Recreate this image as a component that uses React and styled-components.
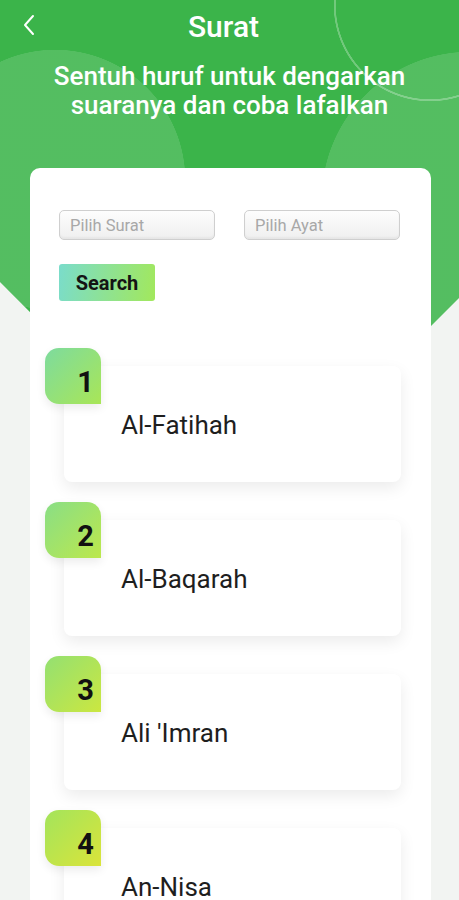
import React from 'react';
import styled, { createGlobalStyle } from 'styled-components';

const GlobalStyle = createGlobalStyle`
  body {
    margin: 0;
    font-family: Roboto, "Liberation Sans", sans-serif;
    background: #f2f4f2;
  }
`;

const Page = styled.div`
  position: relative;
  height: 900px;
  overflow: hidden;
  background: #f2f4f2;

  &::before {
    content: '';
    position: absolute;
    left: 0;
    right: 0;
    top: 0;
    height: 540px;
    background:
      radial-gradient(circle at 430px 5px, transparent 94px, rgba(255, 255, 255, 0.28) 94.5px, rgba(255, 255, 255, 0.28) 96px, transparent 96.5px),
      radial-gradient(circle at 55px 180px, rgba(255, 255, 255, 0.13) 130px, transparent 130.5px),
      radial-gradient(circle at 470px 200px, rgba(255, 255, 255, 0.13) 148px, transparent 148.5px),
      #3bb44a;
    clip-path: polygon(0 0, 100% 0, 100% 298px, 237px 520px, 0 282px);
  }
`;

const Header = styled.header`
  position: relative;
  z-index: 1;
  color: #fff;
`;

const TopBar = styled.div`
  display: grid;
  grid-template-columns: 46px 1fr 58px;
  align-items: center;
  height: 50px;
`;

const BackButton = styled.button`
  display: flex;
  align-items: center;
  justify-content: flex-start;
  width: 46px;
  height: 50px;
  padding: 0 0 0 22px;
  border: 0;
  background: none;
  cursor: pointer;
`;

const Title = styled.h1`
  margin: 0;
  padding-top: 3px;
  text-align: center;
  font-size: 30px;
  font-weight: 500;
  line-height: 47px;
`;

const Subtitle = styled.p`
  margin: 12px 0 0;
  text-align: center;
  font-size: 26px;
  font-weight: 500;
  line-height: 29px;
`;

const Card = styled.main`
  position: relative;
  z-index: 1;
  margin: 48px 28px 0 30px;
  height: 740px;
  background: #fff;
  border-radius: 10px;
`;

const SearchForm = styled.form`
  padding: 42px 30px 47px 29px;
`;

const Fields = styled.div`
  display: flex;
  gap: 29px;
`;

const Field = styled.input`
  box-sizing: border-box;
  width: 156px;
  height: 30px;
  padding: 0 10px;
  border: 1px solid #cfcfcf;
  border-radius: 5px;
  background: linear-gradient(#fdfdfd, #efefef);
  box-shadow: inset 0 -2px 2px rgba(0, 0, 0, 0.04);
  font-family: Roboto, "Liberation Sans", sans-serif;
  font-size: 16.5px;
  color: #333;

  &::placeholder {
    color: #a8a8a8;
  }
`;

const SearchButton = styled.button`
  display: block;
  margin-top: 24px;
  width: 96px;
  height: 37px;
  padding: 0;
  border: 0;
  border-radius: 3px;
  background: linear-gradient(100deg, #7adccb, #a2e85c);
  font-family: Roboto, "Liberation Sans", sans-serif;
  font-size: 20px;
  font-weight: 700;
  color: #141414;
`;

const List = styled.ul`
  list-style: none;
  margin: 0;
  padding: 0 0 0 15px;
  display: flex;
  flex-direction: column;
  gap: 20px;
`;

const Item = styled.li`
  position: relative;
  padding: 18px 0 0 19px;
`;

const Badge = styled.span`
  position: absolute;
  left: 0;
  top: 0;
  z-index: 2;
  box-sizing: border-box;
  width: 56px;
  height: 56px;
  display: flex;
  justify-content: flex-end;
  align-items: flex-end;
  padding: 0 7px 7px 0;
  border-radius: 14px 14px 0 14px;
  background: linear-gradient(135deg, ${(p) => p.$from}, ${(p) => p.$to});
  box-shadow: 0 4px 10px rgba(0, 0, 0, 0.08);
  font-size: 29px;
  font-weight: 700;
  line-height: 1;
  color: #111;
`;

const ItemCard = styled.div`
  box-sizing: border-box;
  width: 337px;
  height: 116px;
  display: flex;
  align-items: center;
  padding: 2px 0 0 57px;
  background: #fff;
  border-radius: 8px;
  box-shadow: 0 6px 16px rgba(0, 0, 0, 0.08);
  font-size: 26px;
  color: #1e1e1e;
`;

const surahs = [
  { no: 1, name: 'Al-Fatihah', from: '#7ddb9e', to: '#a9e657' },
  { no: 2, name: 'Al-Baqarah', from: '#89de86', to: '#bce84c' },
  { no: 3, name: "Ali 'Imran", from: '#93e072', to: '#cbe740' },
  { no: 4, name: 'An-Nisa', from: '#a3e45c', to: '#dae43a' },
];

const App = () => (
  <Page>
    <GlobalStyle />
    <Header>
      <TopBar>
        <BackButton type="button" aria-label="Kembali">
          <svg width="14" height="22" viewBox="0 0 14 22" fill="none">
            <path d="M11 2 3 11l8 9" stroke="#fff" strokeWidth="2" strokeLinecap="round" strokeLinejoin="round" />
          </svg>
        </BackButton>
        <Title>Surat</Title>
        <span />
      </TopBar>
      <Subtitle>
        Sentuh huruf untuk dengarkan
        <br />
        suaranya dan coba lafalkan
      </Subtitle>
    </Header>
    <Card>
      <SearchForm onSubmit={(e) => e.preventDefault()}>
        <Fields>
          <Field placeholder="Pilih Surat" />
          <Field placeholder="Pilih Ayat" />
        </Fields>
        <SearchButton type="submit">Search</SearchButton>
      </SearchForm>
      <List>
        {surahs.map((s) => (
          <Item key={s.no}>
            <Badge $from={s.from} $to={s.to}>{s.no}</Badge>
            <ItemCard>{s.name}</ItemCard>
          </Item>
        ))}
      </List>
    </Card>
  </Page>
);

export default App;
